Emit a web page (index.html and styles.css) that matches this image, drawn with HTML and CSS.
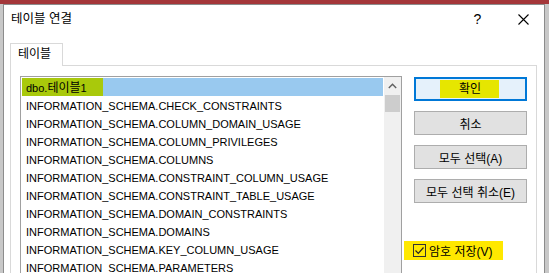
FILE: index.html
```html
<!DOCTYPE html>
<html>
  <head>
    <title>테이블 연결</title>
    <link rel="stylesheet" href="styles.css">
  </head>
  <body>
    <div class="dialog">
      <div class="titlebar">
        <span class="title">테이블 연결</span>
        <span class="cap-help">?</span>
        <span class="cap-close">
          <svg width="11" height="11" viewBox="0 0 11 11"><path d="M0.5 0.5L10.5 10.5M10.5 0.5L0.5 10.5" stroke="#000" stroke-width="1.1" fill="none"/></svg>
        </span>
      </div>

      <div class="tabs">
        <div class="tab">테이블</div>
      </div>

      <div class="pane">
        <!-- table list -->
        <div class="listbox">
          <ul class="items">
            <li class="selected"><span class="mark-green">dbo.<span class="ko">테이블</span>1</span></li>
            <li>INFORMATION_SCHEMA.CHECK_CONSTRAINTS</li>
            <li>INFORMATION_SCHEMA.COLUMN_DOMAIN_USAGE</li>
            <li>INFORMATION_SCHEMA.COLUMN_PRIVILEGES</li>
            <li>INFORMATION_SCHEMA.COLUMNS</li>
            <li>INFORMATION_SCHEMA.CONSTRAINT_COLUMN_USAGE</li>
            <li>INFORMATION_SCHEMA.CONSTRAINT_TABLE_USAGE</li>
            <li>INFORMATION_SCHEMA.DOMAIN_CONSTRAINTS</li>
            <li>INFORMATION_SCHEMA.DOMAINS</li>
            <li>INFORMATION_SCHEMA.KEY_COLUMN_USAGE</li>
            <li>INFORMATION_SCHEMA.PARAMETERS</li>
            <li>INFORMATION_SCHEMA.REFERENTIAL_CONSTRAINTS</li>
          </ul>
          <div class="scrollbar">
            <div class="arrow">
              <svg width="9" height="6" viewBox="0 0 9 6"><path d="M0.8 5L4.5 1.3L8.2 5" stroke="#606060" stroke-width="1.4" fill="none"/></svg>
            </div>
            <div class="thumb"></div>
          </div>
        </div>

        <!-- buttons -->
        <div class="actions">
          <button class="btn default"><span class="mark-yellow">확인</span></button>
          <button class="btn">취소</button>
          <button class="btn">모두 선택(A)</button>
          <button class="btn">모두 선택 취소(E)</button>
          <label class="savepw">
            <span class="box">
              <svg width="11" height="11" viewBox="0 0 11 11"><path d="M1.5 5.5L4.3 8.3L9.5 2.5" stroke="#222" stroke-width="1.2" fill="none"/></svg>
            </span>
            <span class="savepw-text">암호 저장(V)</span>
          </label>
        </div>
      </div>
    </div>
  </body>
</html>
```

FILE: styles.css
```css
body {
  margin: 0;
  width: 549px;
  height: 273px;
  overflow: hidden;
  background: linear-gradient(#a4373a 0, #a4373a 4px, #c8c8c8 4px);
  font-family: "Liberation Sans", "Noto Sans CJK KR", sans-serif;
  font-size: 12px;
  color: #000;
}

.dialog {
  margin: 4px 0 0 3px;
  width: 540px;
  height: 300px;
  background: #fff;
  border: 1px solid #8c8c8c;
  border-bottom: none;
}

.titlebar {
  display: flex;
  align-items: center;
  height: 28px;
}

.title {
  flex: 1;
  padding-left: 7px;
  font-size: 12.5px;
  line-height: 28px;
}

.cap-help {
  width: 49px;
  text-align: center;
  font-size: 14px;
  line-height: 28px;
}

.cap-close {
  width: 42px;
  display: flex;
  justify-content: center;
  align-items: center;
}

.tabs {
  display: flex;
  padding: 10px 0 0 6px;
}

.tab {
  position: relative;
  z-index: 1;
  width: 44px;
  height: 22px;
  padding-left: 7px;
  background: #fff;
  border: 1px solid #d9d9d9;
  border-bottom: none;
  line-height: 21px;
  margin-bottom: -1px;
}

.pane {
  display: flex;
  align-items: flex-start;
  margin-left: 6px;
  width: 527px;
  height: 230px;
  border: 1px solid #d9d9d9;
  padding: 10px 0 0 9px;
  box-sizing: border-box;
}

.listbox {
  display: flex;
  width: 382px;
  height: 220px;
  border: 1px solid #a0a0a0;
  box-sizing: border-box;
  font-size: 11px;
}

.items {
  flex: 1;
  list-style: none;
  margin: 0;
  padding: 1px;
  overflow: hidden;
}

.items li {
  height: 18px;
  padding: 3px 0 0 4px;
  box-sizing: border-box;
  line-height: 15px;
  white-space: nowrap;
}

.items li.selected {
  background: #99c9ef;
  padding: 0;
}

.mark-green {
  display: inline-block;
  height: 18px;
  padding: 3px 16px 0 4px;
  box-sizing: border-box;
  background: #a9c90b;
}

.ko {
  font-size: 12px;
}

.scrollbar {
  width: 17px;
  background: #f0f0f0;
  display: flex;
  flex-direction: column;
  align-items: center;
}

.arrow {
  height: 17px;
  display: flex;
  align-items: center;
  justify-content: center;
  width: 100%;
}

.thumb {
  margin-top: 1px;
  width: 15px;
  height: 17px;
  background: #cdcdcd;
}

.actions {
  display: flex;
  flex-direction: column;
  gap: 10px;
  margin: 1px 0 0 12px;
  width: 113px;
}

.btn {
  width: 113px;
  height: 24px;
  padding: 0;
  background: #e1e1e1;
  border: 1px solid #adadad;
  font-family: "Liberation Sans", "Noto Sans CJK KR", sans-serif;
  font-size: 12px;
  color: #000;
}

.btn.default {
  background: #e5f1fb;
  border: 2px solid #0078d7;
}

.mark-yellow {
  display: inline-block;
  height: 18px;
  line-height: 18px;
  padding: 0 18px 0 19px;
  margin-right: 2px;
  background: #e6e600;
}

.savepw {
  display: flex;
  align-items: center;
  margin: 28px 0 0 -10px;
  padding-left: 9px;
  width: 99px;
  height: 19px;
  box-sizing: border-box;
  background: #ffe800;
}

.box {
  width: 13px;
  height: 13px;
  box-sizing: border-box;
  border: 1px solid #333;
  display: flex;
  align-items: center;
  justify-content: center;
}

.savepw-text {
  margin-left: 3px;
  white-space: nowrap;
}
```
